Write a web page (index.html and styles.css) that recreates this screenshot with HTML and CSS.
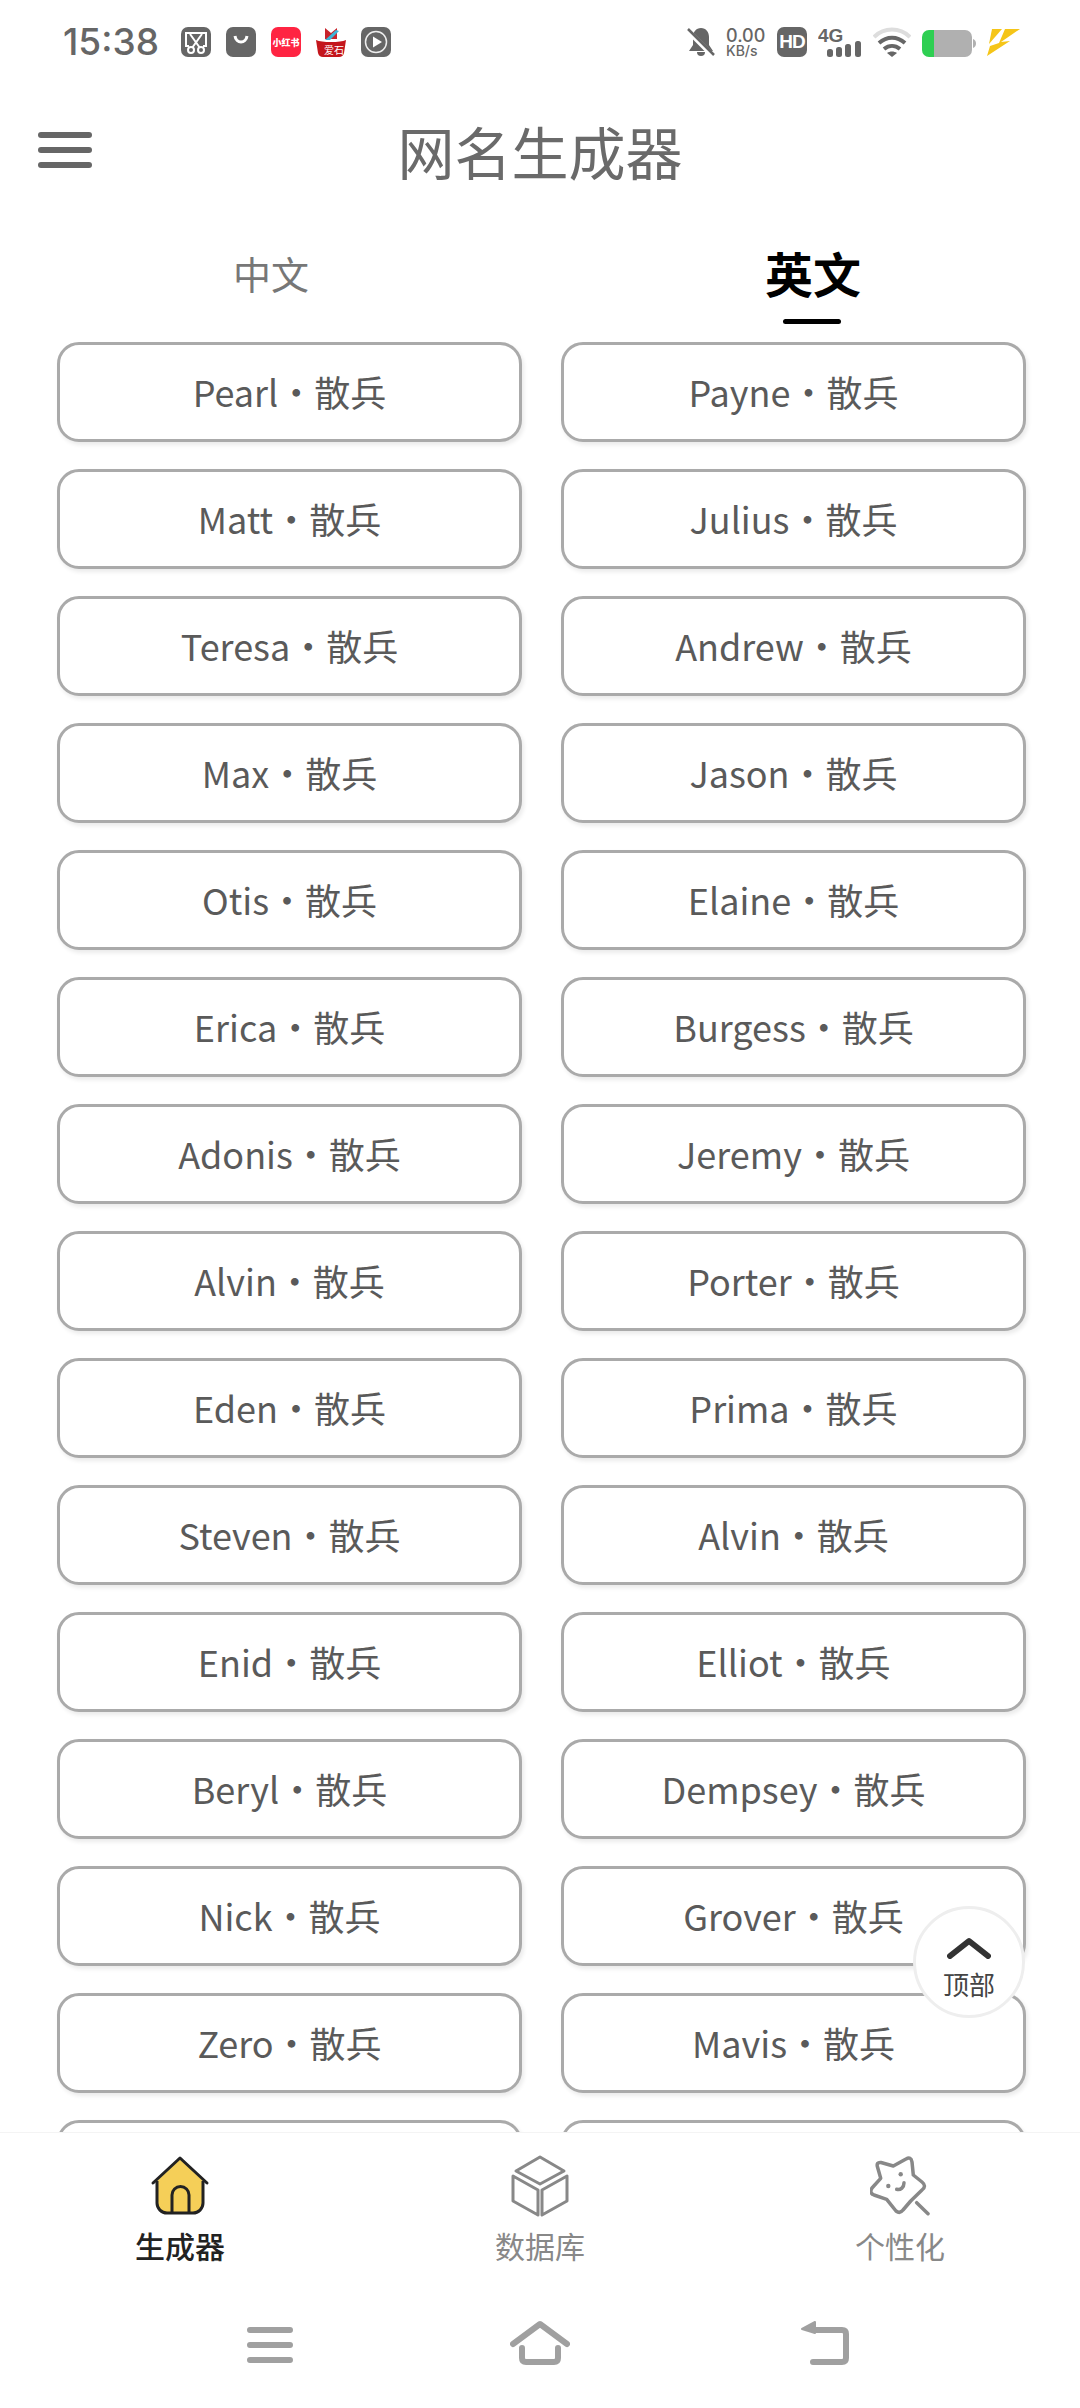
FILE: index.html
```html
<!DOCTYPE html>
<html lang="zh-CN">
<head>
<meta charset="utf-8">
<title>网名生成器</title>
<link rel="stylesheet" href="styles.css">
</head>
<body>
<div class="app">
  <div class="status-bar">
    <div class="status-left">
      <span class="clock">15:38</span>
      <svg class="app-icon" viewBox="0 0 30 30"><rect width="30" height="30" rx="7" fill="#666"/><path d="M8 19H5V6h20v13h-3" fill="none" stroke="#fff" stroke-width="2"/><path d="M9 7l10 14M21 7L11 21" fill="none" stroke="#fff" stroke-width="2"/><circle cx="10" cy="23" r="3" fill="#666" stroke="#fff" stroke-width="2"/><circle cx="20" cy="23" r="3" fill="#666" stroke="#fff" stroke-width="2"/></svg>
      <svg class="app-icon" viewBox="0 0 30 30"><rect width="30" height="30" rx="7" fill="#666"/><path d="M9 9c1 8 11 8 12 0" fill="none" stroke="#fff" stroke-width="3"/></svg>
      <span class="app-icon badge-red">小红书</span>
      <svg class="app-icon" viewBox="0 0 30 30"><path d="M9 12V1l6 5 6-5v11z" fill="#c8242c"/><path d="M9 13L20 3l3 1-9 9z" fill="#3db4d8"/><path d="M0 13q5 2 15 2t15-2l-2 13q-1 4-5 4H7q-4 0-5-4z" fill="#c4161c"/><text class="basket-text" x="18" y="27">爱石</text></svg>
      <svg class="app-icon" viewBox="0 0 30 30"><rect width="30" height="30" rx="7" fill="#666"/><circle cx="15" cy="15" r="10.500" fill="none" stroke="#eee" stroke-width="1.500"/><path d="M12 9.500L21 15l-9 5.500z" fill="#fff"/></svg>
    </div>
    <div class="status-right">
      <svg class="bell" viewBox="0 0 28 30"><path d="M14 1c5 0 8 4 8 9v8l4 6H2l4-6v-8c0-5 3-9 8-9z" fill="#666"/><path d="M10 25h8a4 4 0 0 1-8 0z" fill="#666"/><path d="M0 3l26 26" stroke="#fff" stroke-width="5"/><path d="M1 2l26 26" stroke="#666" stroke-width="2.500"/></svg>
      <div class="speed"><span class="speed-value">0.00</span><span class="speed-unit">KB/s</span></div>
      <span class="hd">HD</span>
      <svg class="signal" viewBox="0 -4 44 34"><text class="signal-text" x="0" y="15">4G</text><rect x="9" y="22" width="6" height="8" rx="2.500" fill="#666"/><rect x="18" y="20" width="6" height="10" rx="2.500" fill="#666"/><rect x="27" y="17" width="6" height="13" rx="2.500" fill="#666"/><rect x="37" y="14" width="6" height="16" rx="2.500" fill="#666"/></svg>
      <svg class="wifi" viewBox="0 0 38 30"><path d="M1 10C11 0 27 0 37 10" fill="none" stroke="#ddd" stroke-width="4"/><path d="M6 16c8-7 18-7 26 0" fill="none" stroke="#666" stroke-width="4"/><path d="M11 22c5-4 11-4 16 0" fill="none" stroke="#666" stroke-width="4"/><path d="M14 26c3-2 7-2 10 0l-5 4z" fill="#666"/></svg>
      <svg class="battery" viewBox="0 0 54 27"><path d="M12 0h31a7 7 0 0 1 7 7v13a7 7 0 0 1-7 7H12z" fill="#b0b0b0"/><path d="M12 0H7a7 7 0 0 0-7 7v13a7 7 0 0 0 7 7h5z" fill="#2ecf52"/><path d="M51 9c2 1 3 2 3 4.500s-1 3.500-3 4.500z" fill="#b0b0b0"/></svg>
      <svg class="bolt" viewBox="0 0 33 28"><path d="M5 0h10L2 15z" fill="#f5c518"/><path d="M18 0h15L14 13l9-1L0 27l3-10 9-3z" fill="#f5c518"/></svg>
    </div>
  </div>

  <header class="top-bar">
    <button class="menu-button" type="button"><span></span><span></span><span></span></button>
    <h1 class="page-title">网名生成器</h1>
  </header>

  <nav class="tabs">
    <span class="tab">中文</span>
    <span class="tab tab-active">英文</span>
  </nav>

  <main class="name-list">
    <div class="name-card">Pearl・散兵</div><div class="name-card">Payne・散兵</div>
    <div class="name-card">Matt・散兵</div><div class="name-card">Julius・散兵</div>
    <div class="name-card">Teresa・散兵</div><div class="name-card">Andrew・散兵</div>
    <div class="name-card">Max・散兵</div><div class="name-card">Jason・散兵</div>
    <div class="name-card">Otis・散兵</div><div class="name-card">Elaine・散兵</div>
    <div class="name-card">Erica・散兵</div><div class="name-card">Burgess・散兵</div>
    <div class="name-card">Adonis・散兵</div><div class="name-card">Jeremy・散兵</div>
    <div class="name-card">Alvin・散兵</div><div class="name-card">Porter・散兵</div>
    <div class="name-card">Eden・散兵</div><div class="name-card">Prima・散兵</div>
    <div class="name-card">Steven・散兵</div><div class="name-card">Alvin・散兵</div>
    <div class="name-card">Enid・散兵</div><div class="name-card">Elliot・散兵</div>
    <div class="name-card">Beryl・散兵</div><div class="name-card">Dempsey・散兵</div>
    <div class="name-card">Nick・散兵</div><div class="name-card">Grover・散兵</div>
    <div class="name-card">Zero・散兵</div><div class="name-card">Mavis・散兵</div>
    <div class="name-card"></div><div class="name-card"></div>
  </main>

  <button class="to-top" type="button">
    <svg class="to-top-arrow" viewBox="0 0 44 22"><path d="M3 19L22 4l19 15" fill="none" stroke="#333" stroke-width="6" stroke-linecap="round" stroke-linejoin="round"/></svg>
    <span>顶部</span>
  </button>

  <nav class="bottom-nav">
    <div class="nav-item nav-item-active">
      <svg class="nav-icon" viewBox="0 0 60 62"><path d="M7 26L30 4l23 22v22a10 10 0 0 1-10 10H17A10 10 0 0 1 7 48z" fill="#f5cf58"/><path d="M3 28L30 3l27 25" fill="none" stroke="#222" stroke-width="3" stroke-linecap="round" stroke-linejoin="round"/><path d="M7 26v22a10 10 0 0 0 10 10h26a10 10 0 0 0 10-10V26" fill="none" stroke="#222" stroke-width="3"/><path d="M22 58V40a8.500 8.500 0 0 1 17 0v18" fill="none" stroke="#222" stroke-width="3"/></svg>
      <span>生成器</span>
    </div>
    <div class="nav-item">
      <svg class="nav-icon" viewBox="0 0 60 62"><g fill="none" stroke="#888" stroke-width="3" stroke-linejoin="round"><path d="M30 2l24 14-24 13L6 16z"/><path d="M3 21l25 14v25L3 46z"/><path d="M32 35l25-14v25L32 60z"/></g></svg>
      <span>数据库</span>
    </div>
    <div class="nav-item">
      <svg class="nav-icon" viewBox="0 0 60 62"><g fill="none" stroke="#888" stroke-width="3.500" stroke-linecap="round" stroke-linejoin="round"><path d="M23.300 11L36 4Q41 1 42 7L43.300 20 52 27Q57 31 52 35L40.700 46 33 55Q30 59 26 56L16.700 44.300 4 40Q-1 38 2 33L10.700 23.300 7.500 12Q6 7 11 7.500z"/><path d="M46.700 47.700L58 58.700"/><path d="M26.700 34.300c4 1 7.300-2 7.300-6.600"/></g><circle cx="30.700" cy="19.300" r="2.200" fill="#888"/><circle cx="18.300" cy="31" r="2.200" fill="#888"/></svg>
      <span>个性化</span>
    </div>
  </nav>

  <div class="system-nav">
    <svg class="sys-icon" viewBox="0 0 60 46"><g stroke="#a0a0a0" stroke-width="6" stroke-linecap="round"><path d="M10 10h40M10 25h40M10 40h40"/></g></svg>
    <svg class="sys-icon" viewBox="0 0 60 46"><g fill="none" stroke="#a0a0a0" stroke-width="6" stroke-linecap="round" stroke-linejoin="round"><path d="M3 24L30 4l27 20"/><path d="M12 28v10q0 4 4 4h28q4 0 4-4V28"/></g></svg>
    <svg class="sys-icon sys-back" viewBox="0 0 60 46"><path d="M20 10h27q4 0 4 4v24q0 4-4 4H18" fill="none" stroke="#a0a0a0" stroke-width="6" stroke-linecap="round" stroke-linejoin="round"/><path d="M7 9L20 2v11z" fill="#a0a0a0" stroke="#a0a0a0" stroke-width="2" stroke-linejoin="round"/></svg>
  </div>
</div>
</body>
</html>
```

FILE: styles.css
```css
* { box-sizing: border-box; }

html, body {
  margin: 0;
  padding: 0;
  background: #fff;
}

body {
  font-family: "Noto Sans CJK SC", "Noto Sans", sans-serif;
}

.app {
  position: relative;
  width: 1080px;
  height: 2408px;
  display: flex;
  flex-direction: column;
  overflow: hidden;
  background: #fff;
}

/* Status bar */
.status-bar {
  flex: none;
  height: 80px;
  padding: 27px 60px 0 63px;
  display: flex;
  justify-content: space-between;
  align-items: flex-start;
}

.status-left {
  display: flex;
  align-items: center;
  gap: 15px;
  height: 30px;
}

.clock {
  margin-right: 7px;
  font-family: Inter, "Liberation Sans", sans-serif;
  font-size: 37px;
  font-weight: 500;
  line-height: 36px;
  color: #666;
}

.app-icon {
  width: 30px;
  height: 30px;
  flex: none;
}

.badge-red {
  display: flex;
  align-items: center;
  justify-content: center;
  border-radius: 7px;
  background: #ff2442;
  color: #fff;
  font-size: 9px;
  font-weight: 900;
  white-space: nowrap;
}

.basket-text {
  font-size: 10px;
  fill: #fff;
  text-anchor: middle;
}

.status-right {
  display: flex;
  align-items: flex-start;
  gap: 11px;
  height: 30px;
}

.bell { width: 28px; height: 30px; }

.speed {
  width: 40px;
  display: flex;
  flex-direction: column;
  font-family: Inter, "Liberation Sans", sans-serif;
  color: #666;
  white-space: nowrap;
}

.speed-value {
  font-size: 18px;
  font-weight: 500;
  line-height: 17px;
}

.speed-unit {
  font-size: 14px;
  font-weight: 500;
  line-height: 14px;
}

.hd {
  width: 30px;
  height: 30px;
  border-radius: 7px;
  background: #666;
  color: #fff;
  font-family: "Liberation Sans", sans-serif;
  font-size: 19px;
  font-weight: 700;
  line-height: 30px;
  text-align: center;
  letter-spacing: -1px;
}

.signal { width: 44px; height: 34px; margin-top: -4px; }

.signal-text {
  font-family: "Liberation Sans", sans-serif;
  font-size: 19px;
  font-weight: 700;
  fill: #666;
}

.wifi { width: 38px; height: 30px; }
.battery { width: 54px; height: 27px; margin-top: 3px; }
.bolt { width: 33px; height: 28px; margin-top: 2px; }

/* Title row */
.top-bar {
  flex: none;
  height: 140px;
  display: flex;
  align-items: center;
  justify-content: center;
  position: relative;
}

.menu-button {
  position: absolute;
  left: 38px;
  top: 52px;
  width: 54px;
  padding: 0;
  border: 0;
  background: none;
  display: flex;
  flex-direction: column;
  gap: 9px;
}

.menu-button span {
  display: block;
  height: 6px;
  border-radius: 3px;
  background: #666;
}

.page-title {
  margin: 0;
  font-size: 57px;
  font-weight: 400;
  line-height: 80px;
  color: #6a6a6a;
}

/* Language tabs */
.tabs {
  flex: none;
  height: 122px;
  display: grid;
  grid-template-columns: 542px 1fr;
  font-size: 38px;
  color: #777;
}

.tab {
  position: relative;
  height: 104px;
  display: flex;
  align-items: center;
  justify-content: center;
}

.tab-active {
  padding-left: 4px;
  font-size: 48px;
  font-weight: 700;
  color: #000;
}

.tab-active::after {
  content: "";
  position: absolute;
  left: 241px;
  bottom: 0;
  width: 58px;
  height: 5px;
  border-radius: 3px;
  background: #000;
}

/* Generated names */
.name-list {
  flex: 1;
  min-height: 0;
  overflow: hidden;
  padding: 0 54px 0 57px;
  display: grid;
  grid-template-columns: 1fr 1fr;
  grid-auto-rows: 100px;
  column-gap: 39px;
  row-gap: 27px;
  align-content: start;
}

.name-card {
  display: flex;
  align-items: center;
  justify-content: center;
  padding-bottom: 2px;
  border: 3px solid #aaa;
  border-radius: 22px;
  background: #fff;
  box-shadow: 2px 3px 4px #ebebeb;
  font-size: 36px;
  font-weight: 400;
  color: #5a5a5a;
  white-space: nowrap;
}

/* Floating scroll-to-top button */
.to-top {
  position: absolute;
  left: 913px;
  top: 1906px;
  width: 112px;
  height: 112px;
  padding: 12px 0 0;
  border: 3px solid #eee;
  border-radius: 50%;
  background: #fff;
  display: flex;
  flex-direction: column;
  align-items: center;
  justify-content: center;
  gap: 10px;
  font-family: inherit;
  font-size: 26px;
  line-height: 30px;
  color: #444;
}

.to-top-arrow { width: 44px; height: 22px; }

/* Bottom navigation */
.bottom-nav {
  flex: none;
  height: 150px;
  padding-top: 22px;
  display: grid;
  grid-template-columns: repeat(3, 1fr);
  border-top: 1px solid #f4f4f4;
  background: #fff;
}

.nav-item {
  display: flex;
  flex-direction: column;
  align-items: center;
  gap: 6px;
  font-size: 30px;
  line-height: 44px;
  color: #888;
}

.nav-item-active {
  color: #222;
  font-weight: 500;
}

.nav-icon { width: 60px; height: 62px; }

/* Android navigation keys */
.system-nav {
  flex: none;
  height: 126px;
  padding: 38px 0 0 240px;
  display: flex;
  gap: 210px;
  align-items: flex-start;
  background: #fff;
}

.sys-icon { height: 46px; width: 60px; }
.sys-back { margin-left: 15px; }
```
